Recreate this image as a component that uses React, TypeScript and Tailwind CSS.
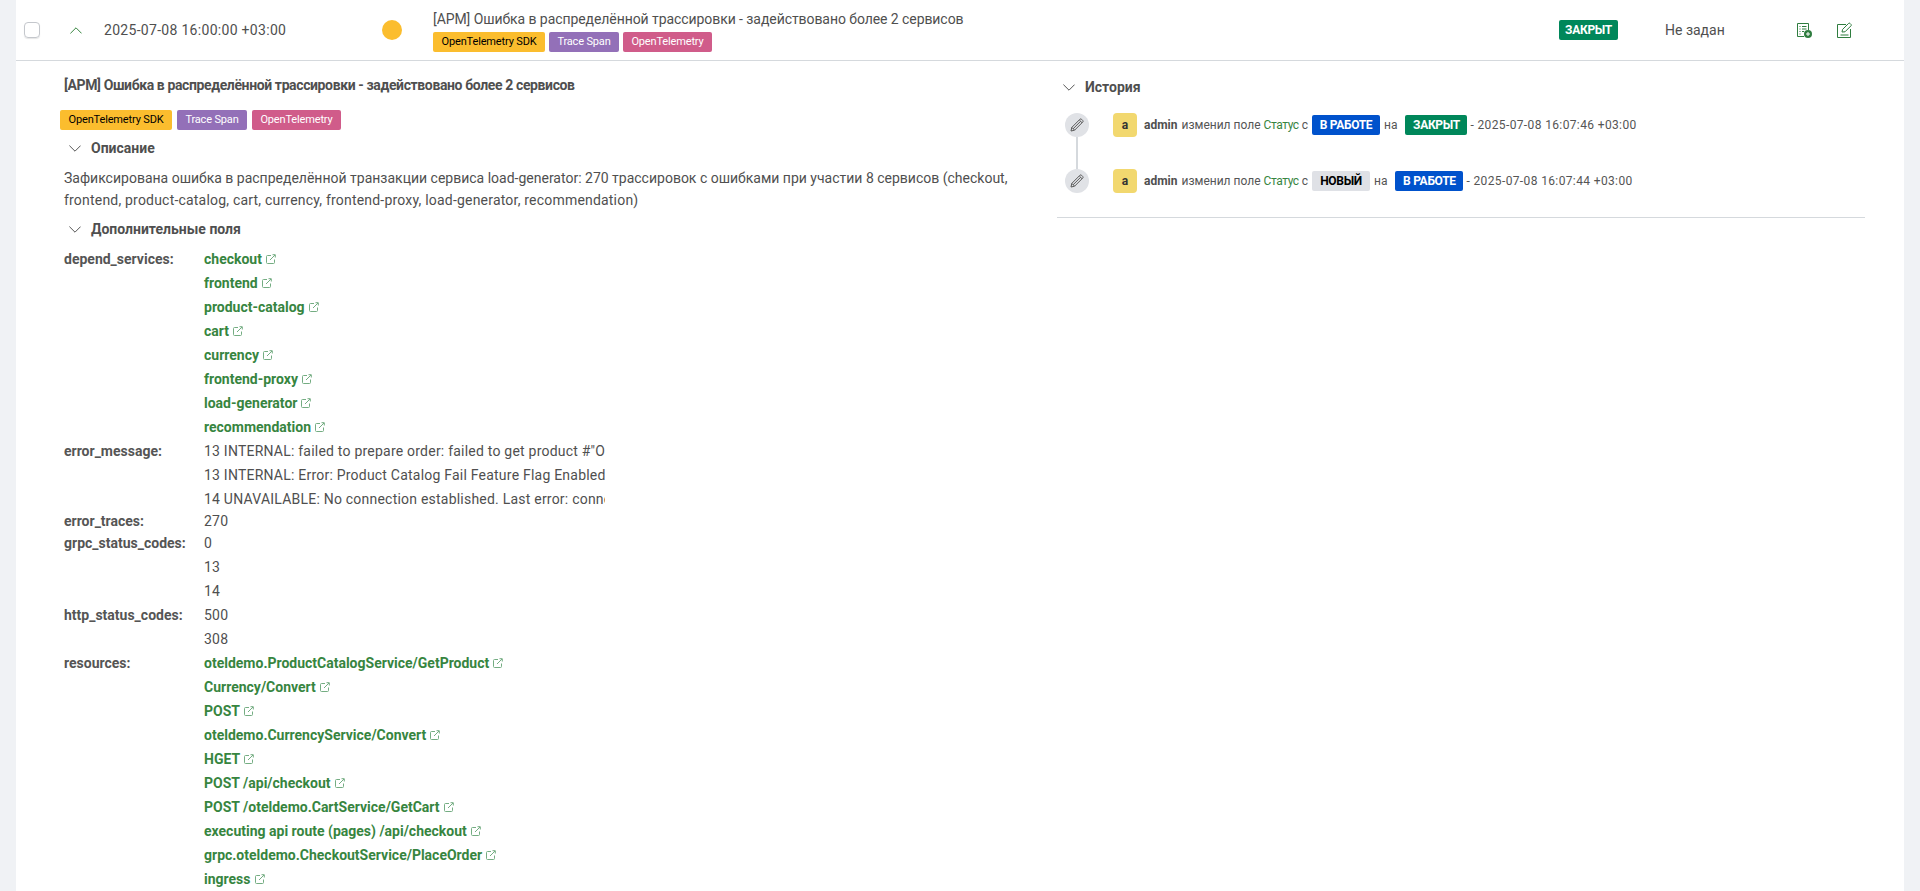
const LINK_GROUPS: Record<string, string[]> = {
  depend_services: [
    'checkout',
    'frontend',
    'product-catalog',
    'cart',
    'currency',
    'frontend-proxy',
    'load-generator',
    'recommendation',
  ],
  resources: [
    'oteldemo.ProductCatalogService/GetProduct',
    'Currency/Convert',
    'POST',
    'oteldemo.CurrencyService/Convert',
    'HGET',
    'POST /api/checkout',
    'POST /oteldemo.CartService/GetCart',
    'executing api route (pages) /api/checkout',
    'grpc.oteldemo.CheckoutService/PlaceOrder',
    'ingress',
  ],
}

function Tag({ label, className }: { label: string; className: string }) {
  return (
    <span className={`inline-flex h-5 items-center justify-center rounded-[2px] text-[11px] leading-5 tracking-[-0.15px] whitespace-nowrap ${className}`}>
      {label}
    </span>
  )
}

function Tags({ gap }: { gap: string }) {
  return (
    <div className={`flex ${gap}`}>
      <Tag label="OpenTelemetry SDK" className="w-[112px] bg-[#fbbd2e] text-black" />
      <Tag label="Trace Span" className="w-[70px] bg-[#9370b8] text-white" />
      <Tag label="OpenTelemetry" className="w-[89px] bg-[#d05c8a] text-white" />
    </div>
  )
}

function Status({ label, className }: { label: string; className: string }) {
  return (
    <span className={`inline-flex h-5 items-center justify-center rounded-[2px] text-xs font-bold tracking-[-0.3px] uppercase ${className}`}>
      {label}
    </span>
  )
}

function Chevron({ up, className }: { up?: boolean; className: string }) {
  return (
    <svg width="12" height="7" viewBox="0 0 12 7" fill="none" stroke="currentColor" className={className}>
      <path d={up ? 'M.4 6.4 6 .8l5.6 5.6' : 'M.4.6 6 6.2 11.6.6'} />
    </svg>
  )
}

function Section({ title }: { title: string }) {
  return (
    <div className="flex h-5 items-center gap-[10px] text-sm font-bold text-[#4f4f4f]">
      <Chevron className="text-[#555]" />
      {title}
    </div>
  )
}

function LinkIcon() {
  return (
    <svg width="10" height="10" viewBox="0 0 10 10" fill="none" stroke="#74ad82" strokeWidth="1">
      <path d="M5 1.5H1.5a1 1 0 0 0-1 1v6a1 1 0 0 0 1 1h6a1 1 0 0 0 1-1V5.5" />
      <path d="M4 6l5-5M6.5.7h2.8v2.8" />
    </svg>
  )
}

function Link({ label }: { label: string }) {
  return (
    <div className="flex h-6 items-center gap-1 text-sm font-bold text-[#37853f]">
      {label}
      <LinkIcon />
    </div>
  )
}

function Field({ name, children }: { name: string; children: React.ReactNode }) {
  return (
    <div className="flex">
      <div className="w-[140px] shrink-0 text-sm leading-5 font-bold text-[#555]">
        <div className="flex h-full max-h-6 items-center">{name}:</div>
      </div>
      <div className="min-w-0">{children}</div>
    </div>
  )
}

function Plain({ value }: { value: string }) {
  return <div className="w-[401px] overflow-hidden text-sm leading-6 tracking-[0.22px] whitespace-nowrap">{value}</div>
}

function PencilIcon() {
  return (
    <svg width="14" height="14" viewBox="0 0 14 14" fill="none" stroke="#5a5a5a" strokeWidth="1">
      <path d="M1 13l.8-3.6L9.9 1.3a1.2 1.2 0 0 1 1.7 0l1.1 1.1a1.2 1.2 0 0 1 0 1.7L4.6 12.2 1 13z" />
      <path d="M3 10.9L10.6 3.3M1.9 9.4l2.7 2.8M9.3 2l2.7 2.7" />
    </svg>
  )
}

function HistoryItem({ from, to, time }: { from: React.ReactNode; to: React.ReactNode; time: string }) {
  return (
    <div className="flex h-6 items-center">
      <div className="flex h-6 w-6 items-center justify-center rounded-full bg-[#e0e2e6]">
        <PencilIcon />
      </div>
      <div className="ml-6 flex h-6 w-6 items-center justify-center rounded bg-[#f2d86f] text-xs font-bold text-[#333]">
        a
      </div>
      <div className="ml-[7px] flex items-center text-xs text-[#555]">
        <b className="mr-1 text-[#4f4f4f]">admin</b>
        изменил поле&nbsp;<span className="tracking-[-0.4px] text-[#37853f]">Статус</span>&nbsp;с
        <span className="ml-1 flex">{from}</span>
        <span className="ml-1">на</span>
        <span className="ml-2 flex">{to}</span>
        <span className="ml-[3px] tracking-[0.37px]">- {time}</span>
      </div>
    </div>
  )
}

export default function App() {
  return (
    <div className="h-screen overflow-hidden bg-[#f0f2f5] px-4 font-['Roboto',sans-serif] text-[#4f4f4f]">
      <div className="h-full bg-white">
        <div className="flex h-[61px] items-center border-b border-[#d5d9dd] text-sm">
          <div className="ml-2 h-4 w-4 rounded-[4px] border border-[#c4c7cc] shadow-[0_1px_1px_rgba(0,0,0,0.1)]" />
          <Chevron up className="ml-[30px] text-[#37853f]" />
          <span className="ml-[22px] w-[278px] tracking-[0.3px]">2025-07-08 16:00:00 +03:00</span>
          <div className="h-5 w-5 rounded-full bg-[#fbbd2e]" />
          <div className="ml-[31px] w-[1126px]">
            <div className="mb-[3px] leading-5 tracking-[-0.07px]">[APM] Ошибка в распределённой трассировки - задействовано более 2 сервисов</div>
            <Tags gap="gap-1" />
          </div>
          <Status label="Закрыт" className="w-[59px] bg-[#00875a] text-white" />
          <span className="ml-[47px] w-[132px]">Не задан</span>
          <svg width="15" height="15" viewBox="0 0 15 15" fill="none" stroke="#2f7d3f">
            <path d="M11.5 7V.5H.5v13H7" />
            <path d="M2.5 3.5h1M5 3.5h4.5M2.5 6h1M5 6h4.5M2.5 8.5h1M5 8.5h2M2.5 11h1" />
            <circle cx="11" cy="11" r="4" fill="#2f7d3f" stroke="none" />
            <path d="M11 9v4M9 11h4" stroke="#fff" />
          </svg>
          <svg width="16" height="16" viewBox="0 0 16 16" fill="none" stroke="#2f7d3f" className="ml-[25px]">
            <path d="M9 2.5H.5v13h13V7" />
            <path d="M5 10l.6-2.6 6-6a1 1 0 0 1 1.4 0l1 1a1 1 0 0 1 0 1.4l-6 6L5 10z" />
            <path d="M3.5 13h8" />
          </svg>
        </div>

        <div className="flex">
          <div className="w-[1041px] shrink-0 pt-[14px] pl-11">
            <div className="pl-1 text-sm leading-5 font-bold tracking-[-0.38px]">[APM] Ошибка в распределённой трассировки - задействовано более 2 сервисов</div>
            <div className="mt-[15px] mb-2">
              <Tags gap="gap-[5px]" />
            </div>
            <div className="pl-[9px]"><Section title="Описание" /></div>
            <div className="mt-[9px] mb-2 w-[990px] pl-1 text-sm leading-[22px]">
              Зафиксирована ошибка в распределённой транзакции сервиса load-generator: 270 трассировок с ошибками при участии 8 сервисов (checkout,{' '}
              <span className="tracking-[0.2px]">frontend, product-catalog, cart, currency, frontend-proxy, load-generator, recommendation)</span>
            </div>
            <div className="pl-[9px]"><Section title="Дополнительные поля" /></div>
            <div className="mt-2 pl-1">
              <Field name="depend_services">
                {LINK_GROUPS.depend_services.map((l) => <Link key={l} label={l} />)}
              </Field>
              <Field name="error_message">
                <Plain value={'13 INTERNAL: failed to prepare order: failed to get product #"OLJCESPC7Z"'} />
                <Plain value="13 INTERNAL: Error: Product Catalog Fail Feature Flag Enabled" />
                <Plain value="14 UNAVAILABLE: No connection established. Last error: connect ECONNREFUSED" />
              </Field>
              <Field name="error_traces">
                <div className="text-sm leading-5 tracking-[0.22px]">270</div>
              </Field>
              <Field name="grpc_status_codes">
                <Plain value="0" />
                <Plain value="13" />
                <Plain value="14" />
              </Field>
              <Field name="http_status_codes">
                <Plain value="500" />
                <Plain value="308" />
              </Field>
              <Field name="resources">
                {LINK_GROUPS.resources.map((l) => <Link key={l} label={l} />)}
              </Field>
            </div>
          </div>

          <div className="w-[808px] pt-4">
            <div className="pl-[6px]"><Section title="История" /></div>
            <div className="mt-[16px] ml-2">
              <HistoryItem
                from={<Status label="В работе" className="w-[68px] bg-[#0052cc] text-white" />}
                to={<Status label="Закрыт" className="w-[62px] bg-[#00875a] text-white" />}
                time="2025-07-08 16:07:46 +03:00"
              />
              <div className="ml-[11px] h-8 w-[2px] bg-[#d5d9dd]" />
              <HistoryItem
                from={<Status label="Новый" className="w-[58px] bg-[#dfe1e6] text-black" />}
                to={<Status label="В работе" className="w-[68px] bg-[#0052cc] text-white" />}
                time="2025-07-08 16:07:44 +03:00"
              />
            </div>
            <div className="mt-6 border-b border-[#d5d9dd]" />
          </div>
        </div>
      </div>
    </div>
  )
}
